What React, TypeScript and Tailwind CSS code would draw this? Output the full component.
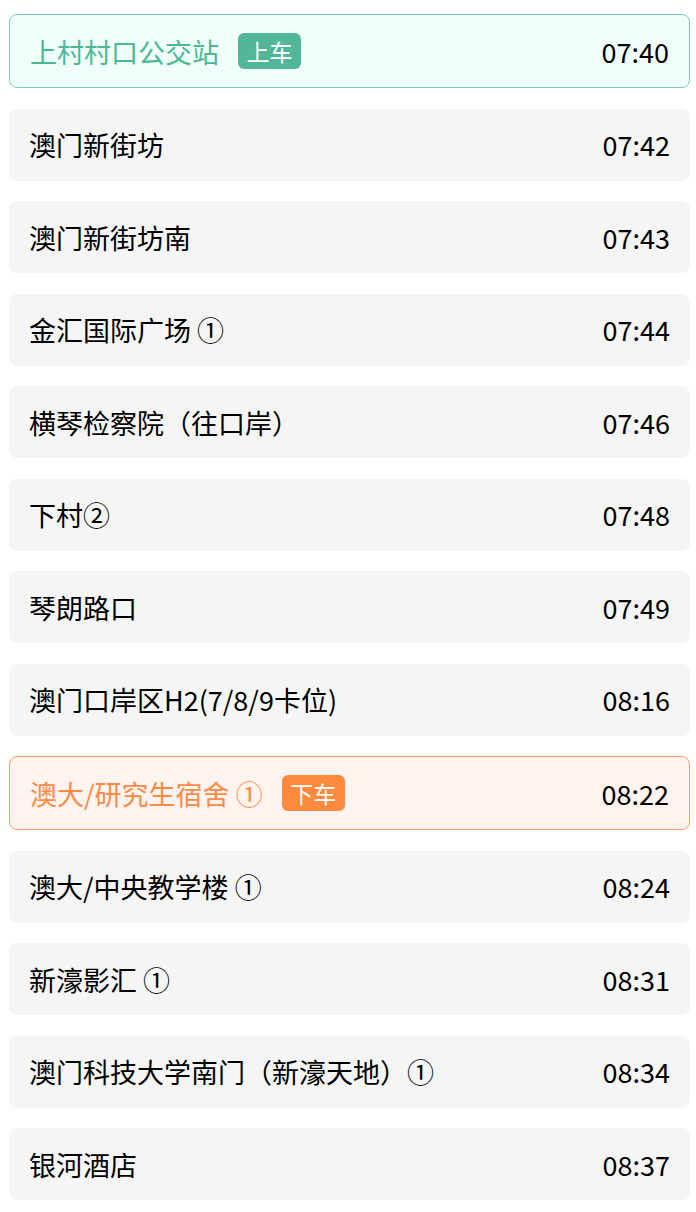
const stops: { name: string; time: string; kind?: "on" | "off" }[] = [
  { name: "上村村口公交站", time: "07:40", kind: "on" },
  { name: "澳门新街坊", time: "07:42" },
  { name: "澳门新街坊南", time: "07:43" },
  { name: "金汇国际广场 ①", time: "07:44" },
  { name: "横琴检察院（往口岸）", time: "07:46" },
  { name: "下村②", time: "07:48" },
  { name: "琴朗路口", time: "07:49" },
  { name: "澳门口岸区H2(7/8/9卡位)", time: "08:16" },
  { name: "澳大/研究生宿舍 ①", time: "08:22", kind: "off" },
  { name: "澳大/中央教学楼 ①", time: "08:24" },
  { name: "新濠影汇 ①", time: "08:31" },
  { name: "澳门科技大学南门（新濠天地）①", time: "08:34" },
  { name: "银河酒店", time: "08:37" },
];

export default function App() {
  return (
    <div
      className="min-h-screen bg-white pt-[14px] pl-[9px] pr-[6px]"
      style={{ fontFamily: '"Noto Sans CJK SC", "Noto Sans", sans-serif' }}
    >
      <ul className="flex flex-col gap-[20.5px]">
        {stops.map((s) => {
          const wrap =
            s.kind === "on"
              ? "h-[74px] border border-[#7fcdb5] bg-[#f1fffb]"
              : s.kind === "off"
                ? "h-[74px] border border-[#ff9c66] bg-[#fff4ef]"
                : "h-[72px] bg-[#f5f5f5]";
          const nameColor =
            s.kind === "on" ? "text-[#4bb892]" : s.kind === "off" ? "text-[#ff8a45]" : "text-black";
          return (
            <li
              key={s.name}
              className={`flex items-center justify-between rounded-lg px-5 ${wrap}`}
            >
              <div className="flex items-center gap-[19px]">
                <span className={`text-[27px] leading-none ${nameColor}`}>{s.name}</span>
                {s.kind === "on" && (
                  <span className="flex h-9 w-[63px] items-center justify-center rounded-md bg-[#52b699] text-[23px] leading-none text-white">
                    上车
                  </span>
                )}
                {s.kind === "off" && (
                  <span className="flex h-9 w-[63px] items-center justify-center rounded-md bg-[#ff8a3d] text-[23px] leading-none text-white">
                    下车
                  </span>
                )}
              </div>
              <span className="text-[27px] leading-none text-black">{s.time}</span>
            </li>
          );
        })}
      </ul>
    </div>
  );
}
